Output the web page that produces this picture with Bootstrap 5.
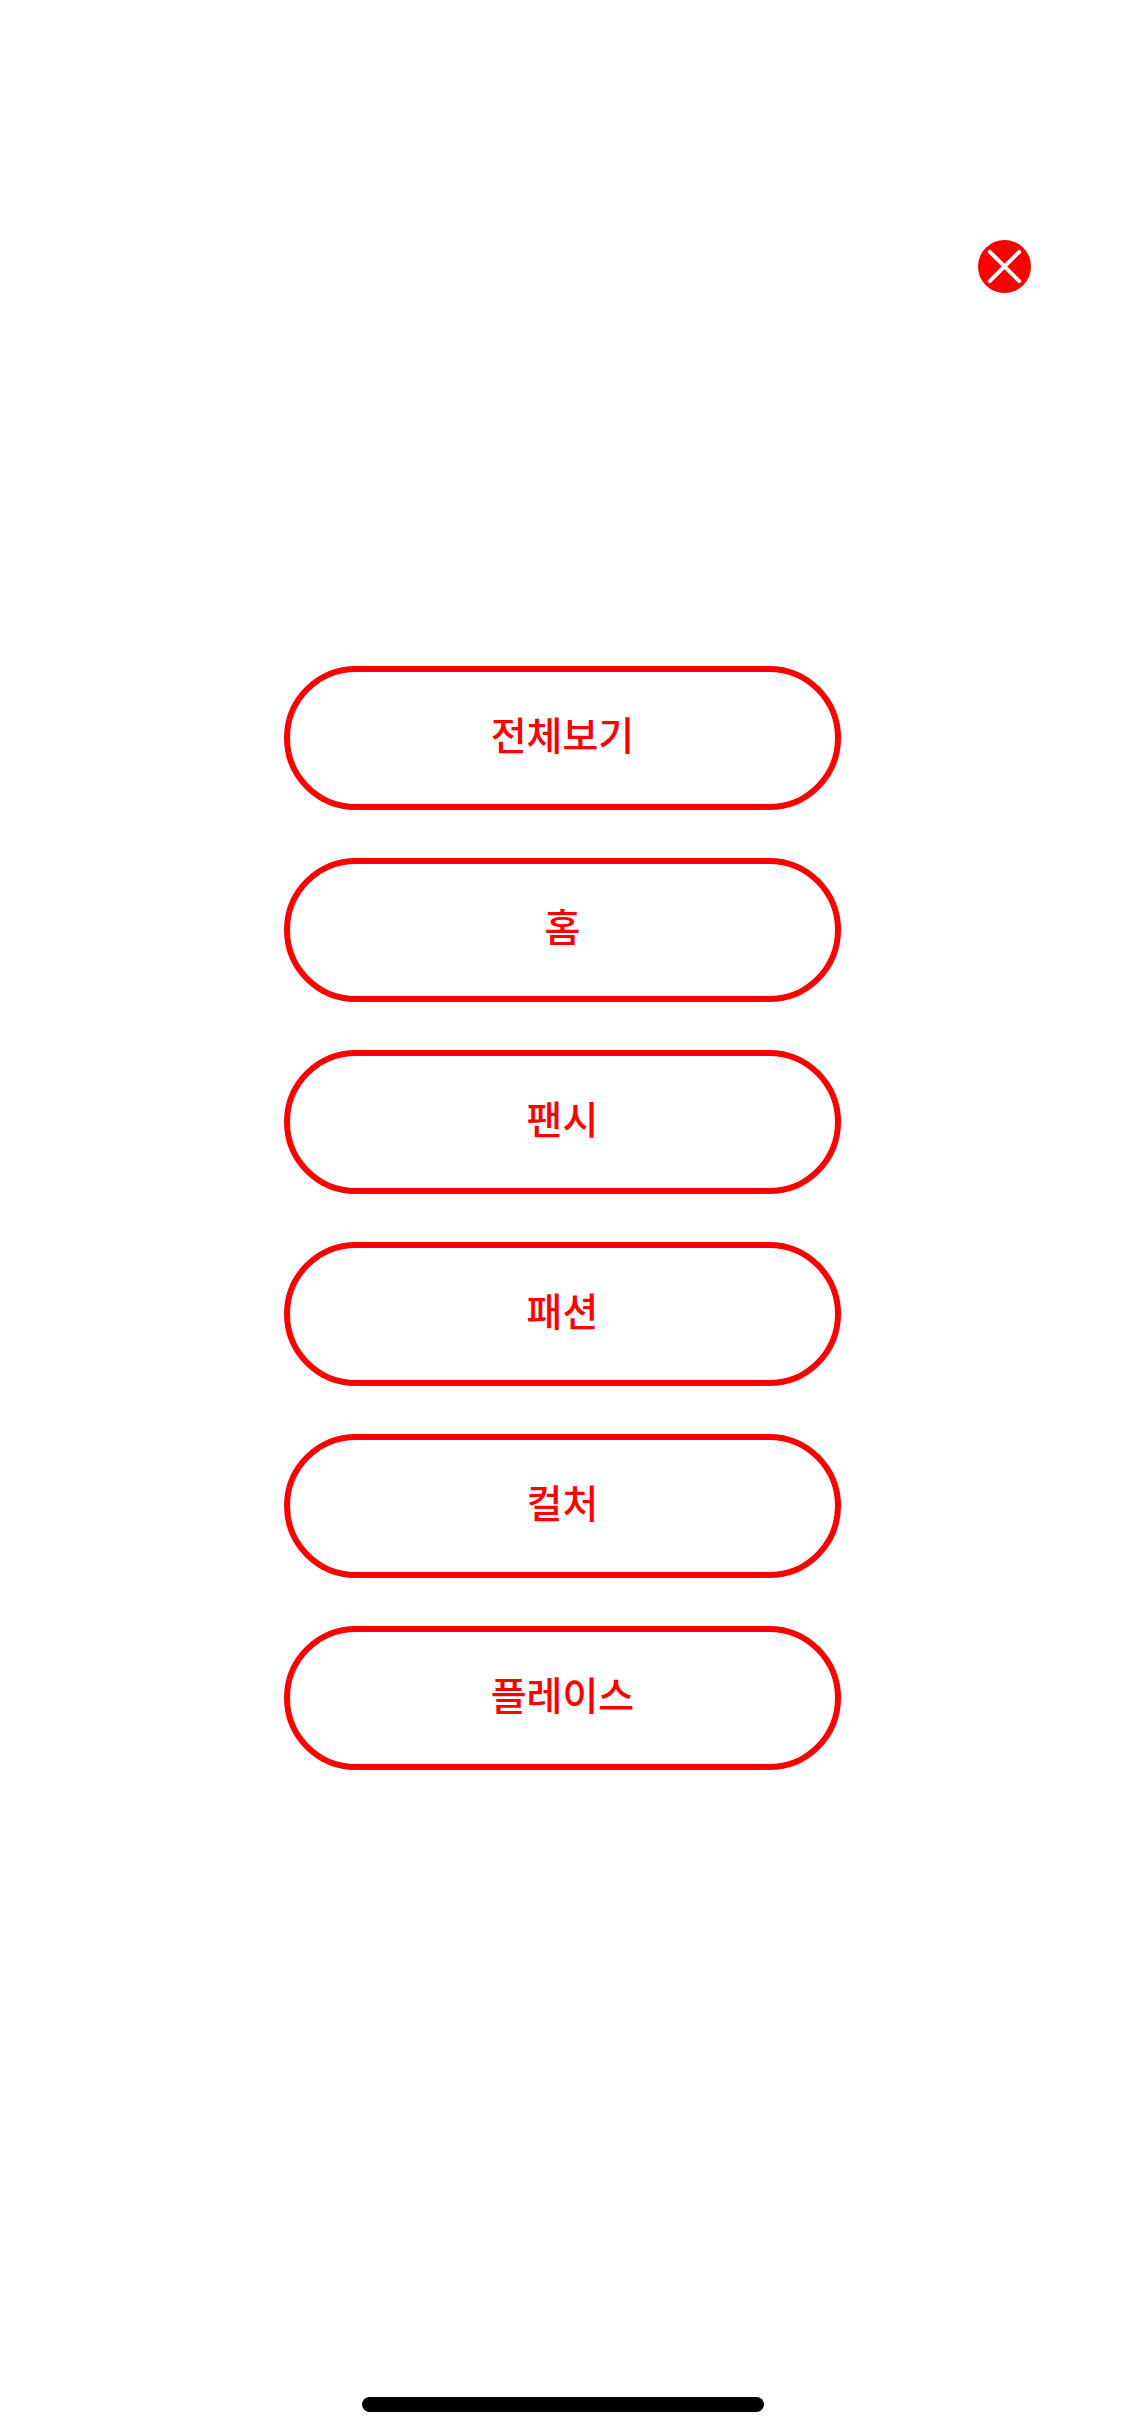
<!DOCTYPE html>
<html lang="ko">
<head>
<meta charset="utf-8">
<meta name="viewport" content="width=device-width, initial-scale=1">
<title>메뉴</title>
<link href="https://cdn.jsdelivr.net/npm/bootstrap@5.3.0/dist/css/bootstrap.min.css" rel="stylesheet">
<style>
  body { font-family: "Noto Sans CJK KR", sans-serif; background: #fff; }
  .menu-top { padding: 240px 94px 0; }
  .close-btn { width: 53px; height: 53px; }
  .menu-nav { max-width: 557px; gap: 48px; margin-top: 373px; }
  .menu-link {
    --bs-btn-color: #f00;
    --bs-btn-border-color: #f00;
    --bs-btn-border-width: 6px;
    --bs-btn-hover-color: #fff;
    --bs-btn-hover-bg: #f00;
    --bs-btn-hover-border-color: #f00;
    --bs-btn-font-size: 39px;
    --bs-btn-font-weight: 500;
    --bs-btn-line-height: 60px;
    padding-top: 31px;
    padding-bottom: 41px;
  }
  .home-bar { width: 402px; height: 15px; margin-bottom: 24px; }
</style>
</head>
<body>
<div class="d-flex flex-column min-vh-100">
  <header class="menu-top d-flex justify-content-end">
    <button type="button" class="close-btn btn p-0 border-0 rounded-circle d-flex" aria-label="닫기">
      <svg width="53" height="53" viewBox="0 0 54 54" aria-hidden="true">
        <circle cx="27" cy="27" r="27" fill="#f00"/>
        <path d="M12 12L42 42M42 12L12 42" stroke="#fff" stroke-width="4" stroke-linecap="round"/>
      </svg>
    </button>
  </header>
  <nav class="menu-nav w-100 mx-auto d-flex flex-column" aria-label="메뉴">
    <a class="menu-link btn rounded-pill" href="#all">전체보기</a>
    <a class="menu-link btn rounded-pill" href="#home">홈</a>
    <a class="menu-link btn rounded-pill" href="#fancy">팬시</a>
    <a class="menu-link btn rounded-pill" href="#fashion">패션</a>
    <a class="menu-link btn rounded-pill" href="#culture">컬처</a>
    <a class="menu-link btn rounded-pill" href="#place">플레이스</a>
  </nav>
  <div class="home-bar bg-black rounded-pill mx-auto mt-auto"></div>
</div>
<script src="https://cdn.jsdelivr.net/npm/bootstrap@5.3.0/dist/js/bootstrap.bundle.min.js"></script>
</body>
</html>
